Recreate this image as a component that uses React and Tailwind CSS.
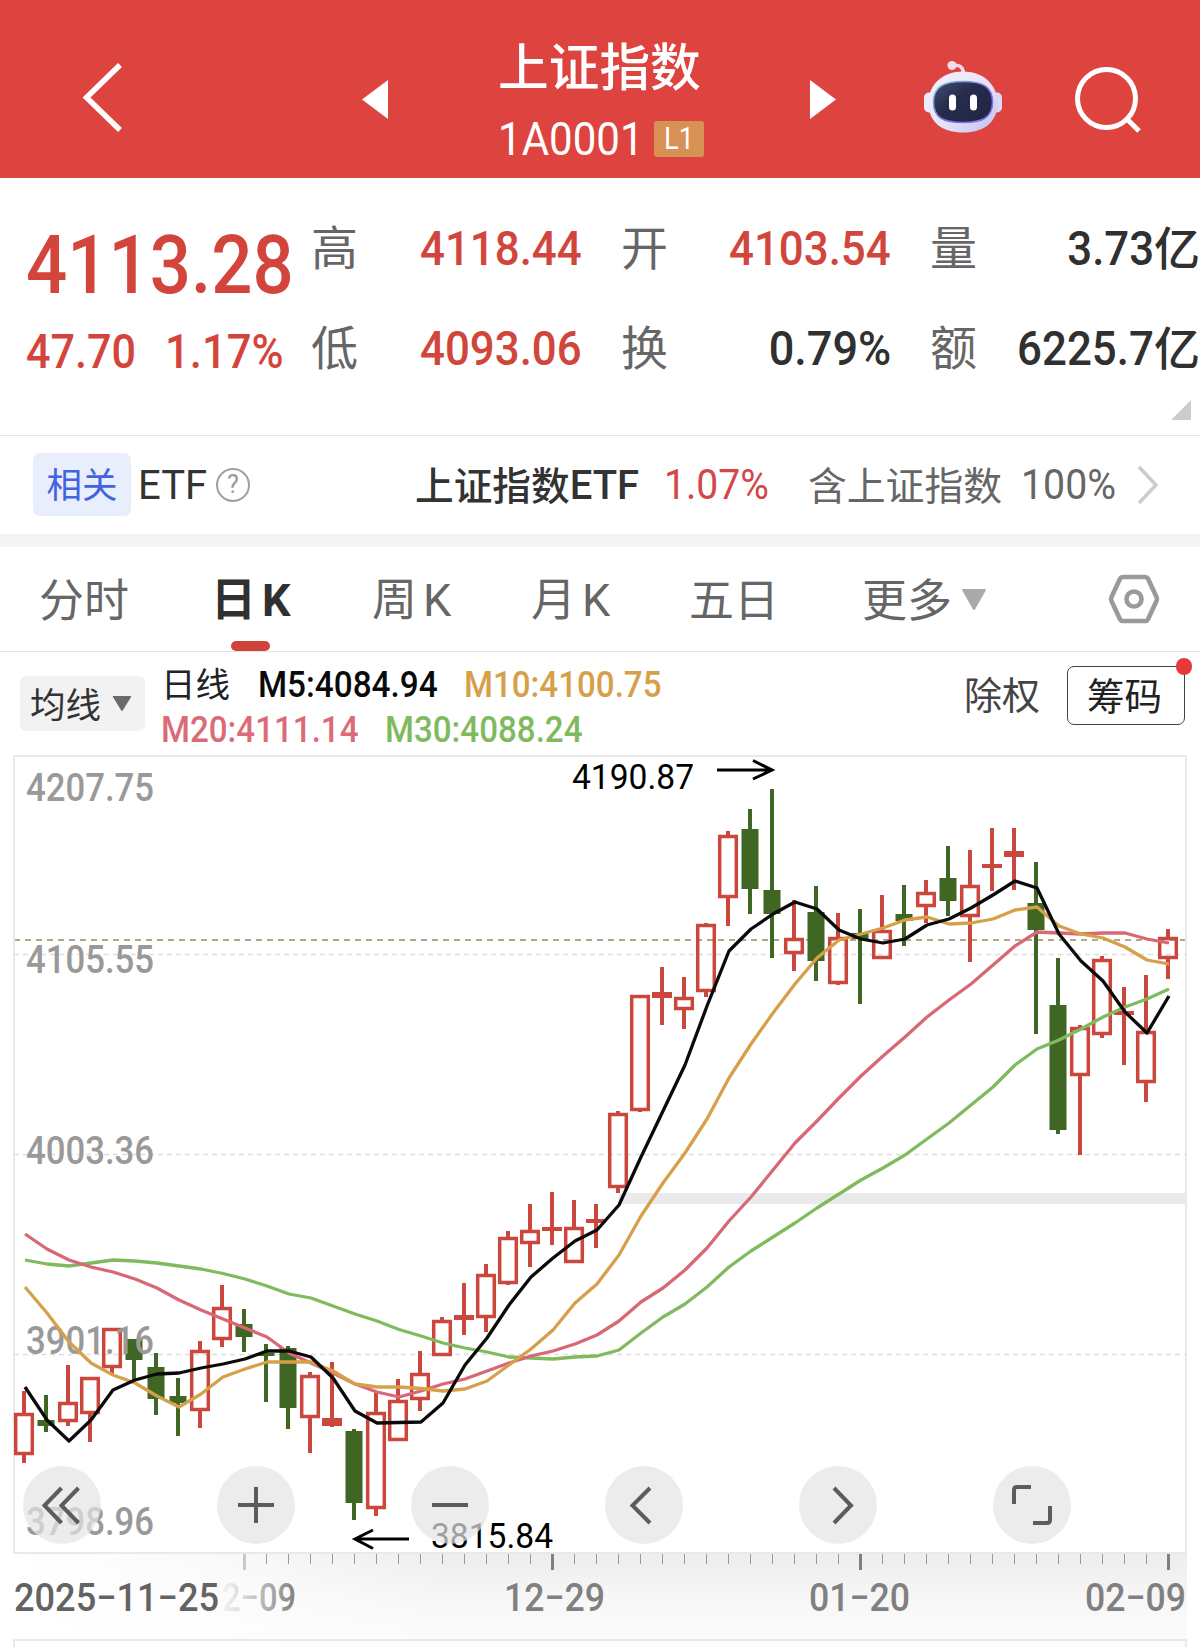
import React from 'react';

// x step is 22px per trading day: [up, high, bodyTop, bodyBottom, low]
const candles = [
  [1, 1391, 1413, 1455, 1463], [0, 1395, 1420, 1426, 1432], [1, 1365, 1402, 1422, 1426],
  [1, 1377, 1377, 1414, 1442], [1, 1328, 1328, 1368, 1374], [0, 1339, 1339, 1360, 1380],
  [0, 1353, 1367, 1399, 1415], [0, 1378, 1396, 1403, 1436], [1, 1341, 1350, 1411, 1428],
  [1, 1285, 1307, 1340, 1347], [0, 1309, 1324, 1337, 1352], [0, 1344, 1353, 1356, 1402],
  [0, 1346, 1348, 1408, 1429], [1, 1372, 1375, 1418, 1453], [1, 1362, 1418, 1426, 1427],
  [0, 1429, 1431, 1503, 1520], [1, 1393, 1412, 1509, 1516], [1, 1379, 1400, 1441, 1441],
  [1, 1351, 1373, 1400, 1411], [1, 1317, 1320, 1356, 1356], [1, 1283, 1315, 1320, 1335],
  [1, 1264, 1274, 1318, 1332], [1, 1231, 1237, 1284, 1285], [1, 1204, 1230, 1244, 1267],
  [1, 1192, 1227, 1231, 1245], [1, 1200, 1227, 1263, 1263], [1, 1204, 1219, 1223, 1248],
  [1, 1111, 1113, 1188, 1193], [1, 995, 995, 1111, 1112], [1, 967, 992, 998, 1025],
  [1, 977, 997, 1010, 1029], [1, 923, 924, 992, 997], [1, 831, 835, 898, 926],
  [0, 809, 829, 889, 914], [0, 789, 890, 914, 958], [1, 900, 938, 954, 971],
  [0, 886, 912, 961, 981], [1, 913, 937, 984, 985], [0, 909, 933, 939, 1004],
  [1, 895, 930, 959, 959], [0, 885, 914, 921, 946], [1, 880, 892, 907, 923],
  [0, 846, 878, 901, 916], [1, 850, 885, 917, 962], [1, 828, 864, 868, 891],
  [1, 828, 851, 857, 890], [0, 862, 903, 930, 1034], [0, 958, 1005, 1130, 1134],
  [1, 1025, 1027, 1076, 1155], [1, 956, 959, 1035, 1038], [1, 987, 1011, 1015, 1065],
  [1, 975, 1031, 1083, 1102], [1, 929, 937, 959, 979],
];

const lines = [
  {
    color: '#0a0a0a',
    ys: [1387, 1420, 1441, 1420, 1390, 1380, 1374, 1373, 1368, 1364, 1359, 1351, 1351, 1357, 1378, 1411, 1423, 1422.5, 1422, 1403, 1365, 1338, 1305, 1277, 1258, 1241, 1230, 1205, 1157, 1111, 1065, 1006, 951, 929, 914, 902, 909, 930, 939, 943, 939, 925, 919, 908, 895, 881, 888, 934, 961, 981, 1012, 1033, 996],
  },
  {
    color: '#d6a04a',
    ys: [1287, 1313, 1342, 1363, 1375, 1383, 1396, 1407, 1394, 1377, 1369, 1362, 1362, 1362, 1371, 1384, 1387, 1387, 1388.5, 1391, 1389, 1381, 1365, 1349, 1330, 1303, 1284, 1255, 1216, 1183, 1153, 1119, 1078, 1044, 1013, 984, 958, 940, 934, 928, 920, 917, 924, 923, 919, 910, 907, 926, 934, 938, 947, 960, 964],
  },
  {
    color: '#d86875',
    ys: [1234, 1249, 1260, 1267, 1272, 1279, 1288, 1300, 1310, 1319, 1328, 1337, 1353, 1363, 1373, 1384, 1392, 1397, 1391, 1384, 1379, 1371, 1363, 1356, 1351, 1344, 1335, 1321, 1302, 1288, 1270, 1248, 1221, 1197, 1170, 1143, 1121, 1098, 1076, 1056, 1037, 1017, 1000, 984, 965, 946, 932, 933, 934, 933, 933, 939, 943],
  },
  {
    color: '#80ba5e',
    ys: [1260, 1264, 1266, 1263, 1260, 1261, 1263, 1266, 1269, 1273.5, 1279, 1286, 1294, 1298, 1306, 1314, 1321, 1329.5, 1336, 1343, 1348, 1352, 1357, 1358, 1359, 1357, 1356, 1350, 1333, 1317, 1304, 1287, 1267, 1251, 1237, 1223, 1208, 1194, 1180, 1168, 1155, 1139, 1123, 1105, 1087, 1065, 1049, 1040, 1029, 1017, 1007, 999, 989],
  },
];

const priceLabels = [
  ['4207.75', 801], ['4105.55', 973], ['4003.36', 1164], ['3901.16', 1354], ['3798.96', 1535],
];

const dateLabels = [['12−29', 504], ['01−20', 809], ['02−09', 1085]];

const Caret = ({ className }) => (
  <svg viewBox="0 0 24 20" preserveAspectRatio="none" className={className}>
    <path d="M2 1h20L12 19z" fill="currentColor" stroke="currentColor" strokeWidth="2" strokeLinejoin="round" />
  </svg>
);

const Robot = () => (
  <svg className="ml-[87px] mt-[60px] h-[75px] w-[80px]" viewBox="0 0 80 75">
    <defs>
      <linearGradient id="shell" x1="0" y1="0" x2="1" y2="1">
        <stop offset="0" stopColor="#f8f2fb" />
        <stop offset=".55" stopColor="#e6e2f8" />
        <stop offset="1" stopColor="#bdbff0" />
      </linearGradient>
      <linearGradient id="rim" x1="0" y1="0" x2="1" y2="1">
        <stop offset="0" stopColor="#7fd3e6" />
        <stop offset=".5" stopColor="#7b6be0" />
        <stop offset="1" stopColor="#8b6ff0" />
      </linearGradient>
      <linearGradient id="visor" x1="0" y1="0" x2="1" y2="1">
        <stop offset="0" stopColor="#465073" />
        <stop offset=".4" stopColor="#262d4c" />
        <stop offset="1" stopColor="#1f2542" />
      </linearGradient>
    </defs>
    <path d="M29 5.500q11-2 11.500 8" fill="none" stroke="#f0d8e4" strokeWidth="3.500" />
    <circle cx="29" cy="5.500" r="4.500" fill="#f3dce6" />
    <rect x="1" y="32.500" width="12" height="20" rx="5" fill="#efeaf9" />
    <rect x="67" y="32.500" width="12" height="20" rx="5" fill="#dcd8f6" />
    <path d="M40 11.500c20 0 34.500 13 34.500 31.500 0 19-13.500 29.500-34.500 29.500S5.500 62 5.500 43 20 11.500 40 11.500z" fill="url(#shell)" />
    <path d="M40 21.500c20 0 29.500 5.500 29.500 20.500 0 16-10.500 20.500-29.500 20.500S10.500 58 10.500 42c0-15 9.500-20.500 29.500-20.500z" fill="url(#visor)" stroke="url(#rim)" strokeWidth="1.500" />
    <rect x="26" y="34.500" width="7" height="16" rx="3.500" fill="#fff" />
    <rect x="47" y="34.500" width="7" height="16" rx="3.500" fill="#fff" />
  </svg>
);

const Header = () => (
  <header className="flex h-[178px] items-start bg-[#dd443f] text-white">
    <svg className="ml-[80px] mt-[60px] h-[76px] w-[46px]" viewBox="0 0 46 76" fill="none" stroke="#fff" strokeWidth="5.500">
      <path d="M40 5 6.500 37.500 40 70" />
    </svg>
    <svg className="ml-[236px] mt-[80px] h-[39px] w-[26px]" viewBox="0 0 26 39" fill="#fff">
      <path d="M26 0v39L0 19.500z" />
    </svg>
    <div className="ml-[110px] w-[211px]">
      <h1 className="mt-[33px] h-[66px] text-[50.700px] font-medium leading-[62px] font-['Noto_Sans_CJK_SC',sans-serif]">上证指数</h1>
      <div className="mt-[16px] flex items-center">
        <span className="block w-[156px] pt-px text-[47px] leading-[46px]">
          <span className="inline-block origin-left scale-x-[0.895]">1A0001</span>
        </span>
        <span className="flex h-[36px] w-[50px] items-center justify-center rounded-[3px] bg-[#d79154] text-[31px] leading-none">
          <span className="inline-block scale-x-[0.88]">L1</span>
        </span>
      </div>
    </div>
    <svg className="ml-[101px] mt-[80px] h-[39px] w-[26px]" viewBox="0 0 26 39" fill="#fff">
      <path d="M0 0v39l26-19.500z" />
    </svg>
    <Robot />
    <svg className="ml-[69px] mt-[62px] h-[72px] w-[72px]" viewBox="0 0 72 72" fill="none" stroke="#fff" strokeWidth="5">
      <circle cx="34.500" cy="36.500" r="29" />
      <path d="m55 57 12 12" />
    </svg>
  </header>
);

const Stat = ({ label, value, unit, dark, valueClass, numClass = 'scale-x-[0.895]' }) => (
  <div className="flex h-[60px] items-center">
    <span className="w-[47px] pb-[3px] text-[47px] leading-[60px] text-[#666] font-['Noto_Sans_CJK_SC',sans-serif]">{label}</span>
    <span className={`flex items-center justify-end pt-[5px] text-[49px] font-medium leading-[60px] ${valueClass} ${dark ? 'text-[#303030]' : 'text-[#d0463d]'}`}>
      <span className={`inline-block origin-right ${numClass}`}>{value}</span>
      {unit && <span className="pb-[8px] text-[46px] leading-[60px] font-['Noto_Sans_CJK_SC',sans-serif]">{unit}</span>}
    </span>
  </div>
);

const Quote = () => (
  <section className="relative flex h-[258px] border-b border-[#e6e6e6] pt-[38px]">
    <div className="w-[311px] pl-[26px] font-medium text-[#d3453c]">
      <div className="mt-[7px] h-[84px] w-[280px] text-[82px] leading-[84px]">
        <span className="inline-block origin-left scale-x-[0.885]">4113.28</span>
      </div>
      <div className="mt-[15px] flex text-[49px] leading-[60px]">
        <span className="w-[139px]"><span className="inline-block origin-left scale-x-[0.88]">47.70</span></span>
        <span><span className="inline-block origin-left scale-x-[0.89]">1.17%</span></span>
      </div>
    </div>
    <div className="w-[310px]">
      <Stat label="高" value="4118.44" valueClass="w-[224px]" />
      <div className="h-[40px]" />
      <Stat label="低" value="4093.06" valueClass="w-[224px]" />
    </div>
    <div className="w-[309px]">
      <Stat label="开" value="4103.54" valueClass="w-[223px]" />
      <div className="h-[40px]" />
      <Stat label="换" value="0.79%" dark valueClass="w-[223px]" numClass="scale-x-[0.92]" />
    </div>
    <div className="w-[270px]">
      <Stat label="量" value="3.73" unit="亿" dark valueClass="w-[223px]" />
      <div className="h-[40px]" />
      <Stat label="额" value="6225.7" unit="亿" dark valueClass="w-[223px]" />
    </div>
    <svg className="absolute bottom-[15px] right-[9px] h-[20px] w-[20px]" viewBox="0 0 20 20">
      <path d="M20 0v20H0z" fill="#ccc" />
    </svg>
  </section>
);

const EtfRow = () => (
  <section className="flex h-[98px] items-center pb-px pl-[33px] text-[#333]">
    <span className="flex h-[63px] w-[98px] items-center justify-center rounded-[7px] bg-[#e9eefd] pb-[3px] text-[35.500px] leading-[60px] text-[#4163de] font-['Noto_Sans_CJK_SC',sans-serif]">相关</span>
    <span className="ml-[7px] w-[78px] pt-[3px] text-[40px] leading-[60px]"><span className="inline-block origin-left">ETF</span></span>
    <span className="flex h-[34px] w-[34px] items-center justify-center rounded-full border-2 border-[#a0a0a0] text-[25px] leading-none text-[#999]">?</span>
    <span className="ml-[165px] flex w-[249px] items-center text-[38.700px] font-medium leading-[60px] font-['Noto_Sans_CJK_SC',sans-serif]">
      <span className="pb-[3px]">上证指数</span>
      <span className="inline-block pt-[3px] text-[40px] font-[Roboto]">ETF</span>
    </span>
    <span className="w-[144px] pt-px text-[42px] leading-[60px] text-[#d2474a]"><span className="inline-block origin-left scale-x-[0.93]">1.07%</span></span>
    <span className="w-[213px] pb-[3px] text-[38.800px] leading-[60px] text-[#666] font-['Noto_Sans_CJK_SC',sans-serif]">含上证指数</span>
    <span className="w-[116px] pt-px text-[42px] leading-[60px] text-[#666]"><span className="inline-block origin-left scale-x-[0.935]">100%</span></span>
    <svg className="h-[40px] w-[22px]" viewBox="0 0 22 40" fill="none" stroke="#ccc" strokeWidth="3.500">
      <path d="m2 2 17 18L2 38" />
    </svg>
  </section>
);

const Tabs = () => (
  <nav className="relative flex h-[105px] items-center border-b border-[#e2e2e2] text-[45px] leading-[60px] text-[#666] font-['Noto_Sans_CJK_SC',sans-serif]">
    <span className="ml-[39px] w-[172px] pb-[3px]">分时</span>
    <span className="flex w-[161px] gap-[6px] font-bold text-[#303030]">日<span className="-mb-[3px] leading-[67px] font-[Roboto]">K</span></span>
    <span className="flex w-[159px] gap-[6px]">周<span className="-mb-[3px] leading-[67px] font-[Roboto]">K</span></span>
    <span className="flex w-[158px] gap-[6px]">月<span className="-mb-[3px] leading-[67px] font-[Roboto]">K</span></span>
    <span className="w-[173px] pb-[3px]">五日</span>
    <span className="w-[99px] pb-[3px]">更多</span>
    <Caret className="h-[21px] w-[26px] text-[#aaa]" />
    <svg className="ml-[119px] h-[52px] w-[56px]" viewBox="0 0 56 52" fill="none" stroke="#9a9a9a" strokeWidth="4.600" strokeLinejoin="round">
      <path d="M17 4h22q2 0 3 1.700L50.500 24q1 2 0 4L42 46.300Q41 48 39 48H17q-2 0-3-1.700L5.500 28q-1-2 0-4L14 5.700Q15 4 17 4z" />
      <circle cx="28" cy="26" r="7.500" />
    </svg>
    <span className="absolute bottom-0 left-[231px] h-[10px] w-[39px] rounded-full bg-[#d0433b]" />
  </nav>
);

const Legend = () => (
  <section className="flex h-[103px] items-start text-[36px] leading-[44px]">
    <div className="ml-[20px] mt-[24px] flex h-[55px] w-[125px] items-center rounded-[6px] bg-[#f2f2f2] pl-[10px] text-[#333]">
      <span className="w-[82px] pb-[2px] text-[35.500px] font-['Noto_Sans_CJK_SC',sans-serif]">均线</span>
      <Caret className="h-[15px] w-[20px] text-[#6a6a6a]" />
    </div>
    <div className="ml-[16px] mt-[11px] w-[560px] font-medium">
      <div className="flex h-[44px]">
        <span className="-mt-[3px] w-[97px] text-[34.500px] font-normal text-[#222] font-['Noto_Sans_CJK_SC',sans-serif]">日线</span>
        <span className="w-[206px] text-[#0a0a0a]"><span className="inline-block origin-left scale-x-[0.925]">M5:4084.94</span></span>
        <span className="text-[#d6a04a]"><span className="inline-block origin-left scale-x-[0.92]">M10:4100.75</span></span>
      </div>
      <div className="flex h-[44px] pt-px">
        <span className="w-[224px] text-[#dc6b78]"><span className="inline-block origin-left scale-x-[0.92]">M20:4111.14</span></span>
        <span className="text-[#80ba5e]"><span className="inline-block origin-left scale-x-[0.92]">M30:4088.24</span></span>
      </div>
    </div>
    <span className="ml-[243px] mt-[19px] w-[103px] text-[38px] text-[#444] font-['Noto_Sans_CJK_SC',sans-serif]">除权</span>
    <div className="relative mt-[14px] flex h-[59px] w-[118px] items-center justify-center rounded-[7px] border border-[#444] pb-[3px] pr-[3px] text-[37.500px] text-[#222] font-['Noto_Sans_CJK_SC',sans-serif]">
      筹码
      <span className="absolute -right-[8px] -top-[9px] h-[17px] w-[16px] rounded-full bg-[#e8383d]" />
    </div>
  </section>
);

const Candle = ({ data: [up, high, top, bottom, low], x }) => {
  const color = up ? '#cb473e' : '#3f6723';
  const hollow = up && bottom - top > 8;
  return (
    <g fill={color} stroke="none">
      {top > high && <rect x={x - 2} y={high} width="4" height={top - high} />}
      {low > bottom && <rect x={x - 2} y={bottom} width="4" height={low - bottom} />}
      {hollow
        ? <rect x={x - 8.300} y={top + 1.500} width="16.600" height={bottom - top - 3} fill="none" stroke={color} strokeWidth="3.500" />
        : <rect x={x - (up ? 10 : 8.500)} y={top} width={up ? 20 : 17} height={bottom - top} />}
    </g>
  );
};

const Chart = () => (
  <svg className="block h-[893px] w-[1200px] font-[Roboto]" viewBox="0 754 1200 893">
    <defs>
      <linearGradient id="axisShade" x1="0" y1="0" x2="0" y2="1">
        <stop offset="0" stopColor="#ededed" />
        <stop offset=".5" stopColor="#f7f7f7" />
        <stop offset="1" stopColor="#fcfcfc" />
      </linearGradient>
      <linearGradient id="axisFade" x1="0" y1="0" x2="1" y2="0">
        <stop offset="0" stopColor="#fff" />
        <stop offset=".45" stopColor="#fff" stopOpacity=".7" />
        <stop offset="1" stopColor="#fff" stopOpacity="0" />
      </linearGradient>
      <linearGradient id="dateFade" gradientUnits="userSpaceOnUse" x1="222" y1="0" x2="296" y2="0">
        <stop offset="0" stopColor="#808080" stopOpacity=".06" />
        <stop offset=".3" stopColor="#808080" stopOpacity=".3" />
        <stop offset="1" stopColor="#808080" />
      </linearGradient>
    </defs>

    {/* Date axis background */}
    <rect x="13" y="1554" width="1174" height="93" fill="url(#axisShade)" />
    <rect x="12" y="1554" width="440" height="93" fill="url(#axisFade)" />

    {/* Grid */}
    <g stroke="#dedede" strokeWidth="1.300" strokeDasharray="5 4">
      <path d="M14 954.500H1186M14 1154.500H1186M14 1354.500H1186" />
    </g>
    <rect x="619" y="1193" width="568" height="11" fill="#eaeaea" />
    <path d="M14 940H1186" stroke="#b5a684" strokeWidth="2" strokeDasharray="6 5" />
    <g fill="none" stroke="#e9e9e9" strokeWidth="2">
      <path d="M14 756H1186V1553H14zM14 1647V1640H1186V1647" />
    </g>

    {candles.map((c, i) => <Candle key={i} data={c} x={24 + i * 22} />)}

    <g fontSize="39.500" fill="#999" fontWeight="500">
      {priceLabels.map(([text, y]) => (
        <text key={text} x="26" y={y} textLength="128" lengthAdjust="spacingAndGlyphs">{text}</text>
      ))}
    </g>

    {lines.slice().reverse().map(({ color, ys }) => (
      <polyline
        key={color}
        points={ys.map((y, i) => `${25 + i * 22},${y}`).join(' ')}
        fill="none"
        stroke={color}
        strokeWidth="3.300"
        strokeLinejoin="round"
      />
    ))}

    {/* High / low markers */}
    <g fill="none" stroke="#000" strokeWidth="3">
      <path d="M717 770H771M753 760.500 772 770 753 779" />
      <path d="M409 1539H356M373 1530 355 1539 373 1548.500" />
    </g>
    <g fontSize="35.500" fill="#000">
      <text x="572" y="789" textLength="122" lengthAdjust="spacingAndGlyphs">4190.87</text>
      <text x="431" y="1548" textLength="122" lengthAdjust="spacingAndGlyphs">3815.84</text>
    </g>

    {/* Date axis */}
    {candles.map((_, i) => {
      if (i < 10) return null;
      const x = 24 + i * 22;
      const major = (i - 10) % 14 === 0;
      return major
        ? <rect key={i} x={x - 1} y="1554" width="3" height="16" fill={i === 10 ? '#c8c8c8' : '#808080'} />
        : <rect key={i} x={x} y="1554" width="1" height="10" fill="#9a9a9a" />;
    })}
    <g fontSize="39" fontWeight="500" fill="#808080">
      <text x="222" y="1611" textLength="74" lengthAdjust="spacingAndGlyphs" fill="url(#dateFade)">2−09</text>
      <text x="14" y="1611" textLength="205" lengthAdjust="spacingAndGlyphs" fill="#636363">2025−11−25</text>
      {dateLabels.map(([text, x]) => (
        <text key={text} x={x} y="1611" textLength="101" lengthAdjust="spacingAndGlyphs">{text}</text>
      ))}
    </g>
  </svg>
);

// glyphs for the round chart controls, 78x78 each
const controls = [
  'M38.500 22 21.500 39.500 38.500 57M55.500 22 38.500 39.500 55.500 57',
  'M39 21V57M21 39H57',
  'M21 39H57',
  'M45 22 27.500 39.500 45 57',
  'M35 22 52 39.500 35 57',
  'M21 38V24Q21 21 24 21H38M40 57H54Q57 57 57 54V40',
];

const App = () => (
  <div className="h-[1647px] w-[1200px] overflow-hidden bg-white font-[Roboto,'Noto_Sans_CJK_SC',sans-serif]">
    <Header />
    <Quote />
    <EtfRow />
    <div className="h-[13px] bg-[#f4f4f4]" />
    <Tabs />
    <Legend />
    <div className="relative -mt-px">
      <Chart />
      <div className="absolute left-[23px] top-[712px] flex gap-[116px]">
        {controls.map((d) => (
          <button key={d} type="button" className="h-[78px] w-[78px] rounded-full bg-[#e4e4e4]/70">
            <svg viewBox="0 0 78 78" fill="none" stroke="#5c5c5c" strokeWidth="4">
              <path d={d} />
            </svg>
          </button>
        ))}
      </div>
    </div>
  </div>
);

export default App;
